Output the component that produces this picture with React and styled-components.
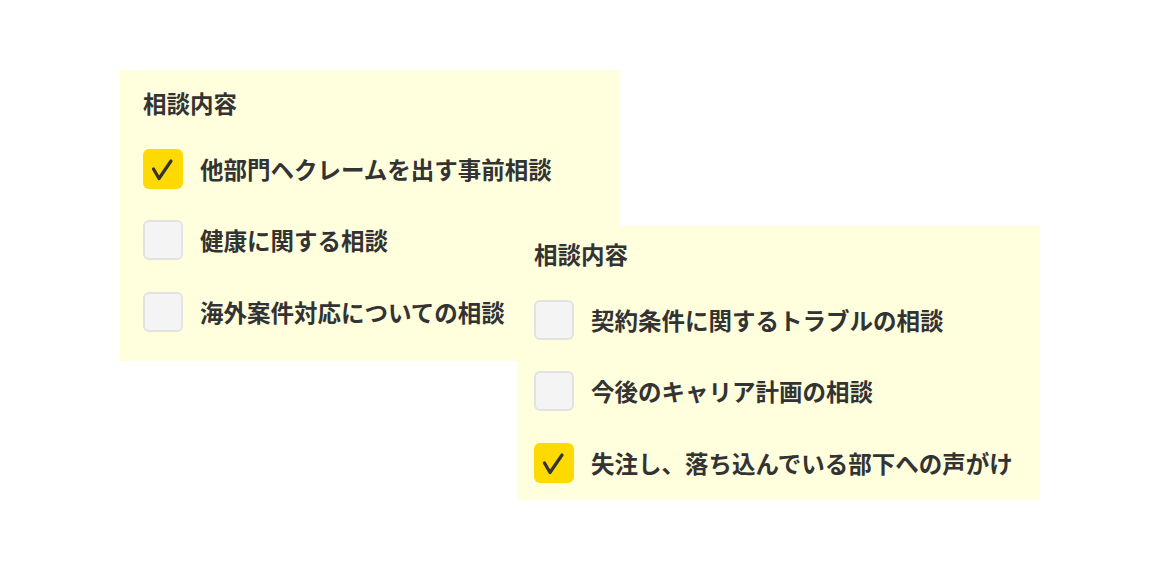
import React from "react";
import styled, { createGlobalStyle } from "styled-components";

const GlobalStyle = createGlobalStyle`
  html, body {
    margin: 0;
    padding: 0;
    background: #ffffff;
  }
  body {
    font-family: "Noto Sans CJK JP", "Noto Sans", sans-serif;
    color: #333333;
  }
`;

const Stage = styled.div`
  position: relative;
  width: 1160px;
  height: 570px;
  padding: 70px 0 0 120px;
  box-sizing: border-box;
  overflow: hidden;
`;

const Panel = styled.section`
  box-sizing: border-box;
  width: ${(p) => p.$width}px;
  padding: ${(p) => p.$pad};
  background: #fffedd;
  display: flex;
  flex-direction: column;
`;

/* the second form card sits over the first one */
const FloatingPanel = styled(Panel)`
  position: absolute;
  left: 517px;
  top: 226px;
`;

const Heading = styled.h3`
  margin: 0 0 29.5px;
  font-size: 23.5px;
  line-height: 32px;
  font-weight: 700;
  color: #333333;
`;

const List = styled.ul`
  list-style: none;
  margin: 0;
  padding: 0;
  display: flex;
  flex-direction: column;
  gap: 31.5px;
`;

const Row = styled.li`
  display: flex;
  align-items: center;
  gap: 17px;
  height: 40px;
`;

const Box = styled.span`
  flex: none;
  box-sizing: border-box;
  width: 40px;
  height: 40px;
  border-radius: 6px;
  display: flex;
  align-items: center;
  justify-content: center;
  background: ${(p) => (p.$checked ? "#ffda00" : "#f4f4f4")};
  border: ${(p) => (p.$checked ? "none" : "2px solid #e2e2e2")};
`;

const Label = styled.span`
  font-size: 23.5px;
  line-height: 32px;
  font-weight: 700;
  color: #333333;
  white-space: nowrap;
`;

const Check = () => (
  <svg width="40" height="40" viewBox="0 0 40 40" fill="none">
    <path
      d="M10.5 20 L16 29.5 L28 12"
      stroke="#333333"
      strokeWidth="3.2"
      strokeLinecap="round"
      strokeLinejoin="round"
    />
  </svg>
);

const Option = ({ checked, children }) => (
  <Row>
    <Box $checked={checked}>{checked && <Check />}</Box>
    <Label>{children}</Label>
  </Row>
);

const first = [
  { text: "他部門ヘクレームを出す事前相談", checked: true },
  { text: "健康に関する相談", checked: false },
  { text: "海外案件対応についての相談", checked: false },
];

const second = [
  { text: "契約条件に関するトラブルの相談", checked: false },
  { text: "今後のキャリア計画の相談", checked: false },
  { text: "失注し、落ち込んでいる部下への声がけ", checked: true },
];

export default function App() {
  return (
    <>
      <GlobalStyle />
      <Stage>
        <Panel $width={500} $pad="17px 0 29px 23px">
          <Heading>相談内容</Heading>
          <List>
            {first.map((o) => (
              <Option key={o.text} checked={o.checked}>
                {o.text}
              </Option>
            ))}
          </List>
        </Panel>
        <FloatingPanel $width={523} $pad="12px 0 17px 17px">
          <Heading>相談内容</Heading>
          <List>
            {second.map((o) => (
              <Option key={o.text} checked={o.checked}>
                {o.text}
              </Option>
            ))}
          </List>
        </FloatingPanel>
      </Stage>
    </>
  );
}
